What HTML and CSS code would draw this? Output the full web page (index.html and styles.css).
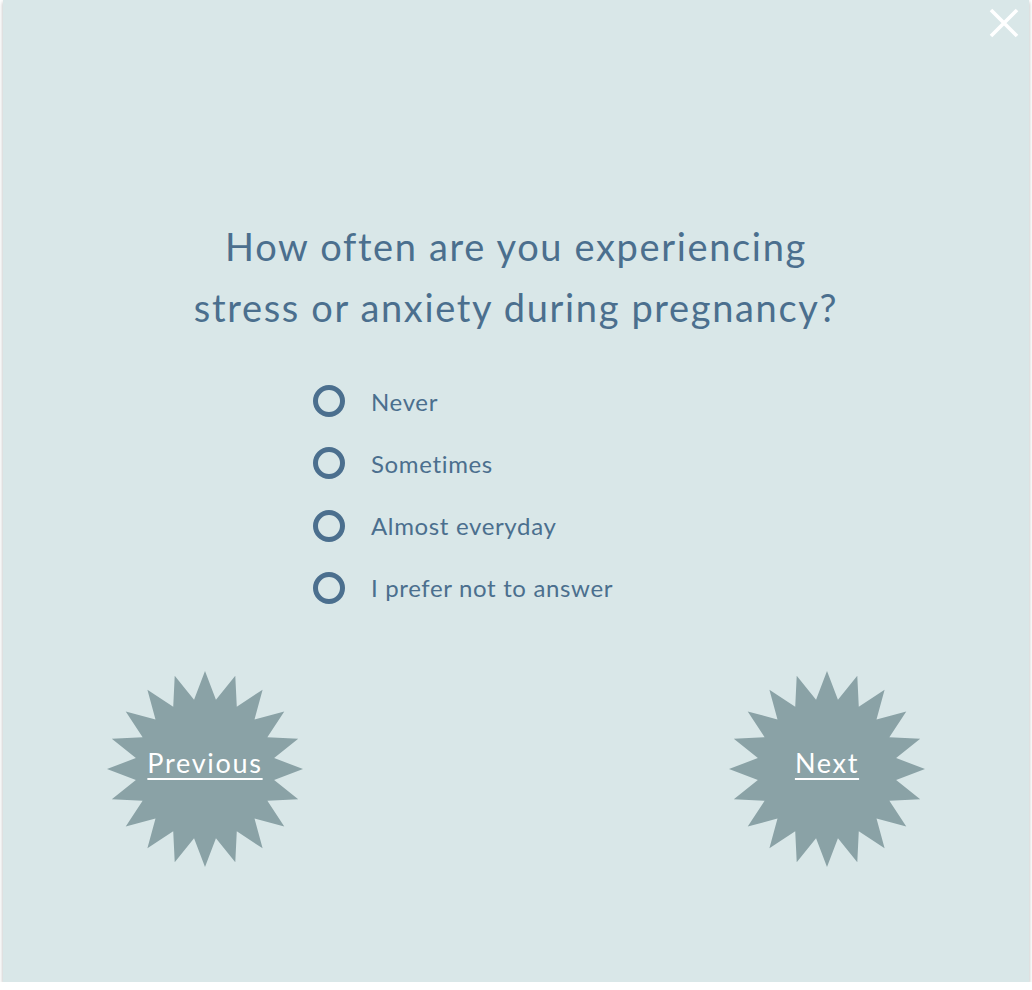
FILE: index.html
```html
<!DOCTYPE html>
<html lang="en">
<head>
<meta charset="utf-8">
<title>Survey</title>
<link rel="stylesheet" href="styles.css">
</head>
<body>
<div class="panel">
  <div class="topbar">
    <button class="close" aria-label="Close">
      <svg width="30" height="30" viewBox="0 0 30 30"><path d="M2 2 L28 28 M28 2 L2 28" stroke="#fff" stroke-width="3.6" stroke-linecap="butt"/></svg>
    </button>
  </div>
  <h1 class="question">How often are you experiencing<br>stress or anxiety during pregnancy?</h1>
  <ul class="options">
    <li class="option"><span class="radio"></span><span class="label">Never</span></li>
    <li class="option"><span class="radio"></span><span class="label">Sometimes</span></li>
    <li class="option"><span class="radio"></span><span class="label">Almost everyday</span></li>
    <li class="option"><span class="radio"></span><span class="label">I prefer not to answer</span></li>
  </ul>
  <div class="nav">
    <a class="burst" href="#">
      <svg class="burst-shape" width="200" height="200" viewBox="0 0 200 200"><polygon fill="#8aa2a6" points="100,2 110.95,30.86 130.28,6.8 131.78,37.63 157.6,20.72 149.5,50.5 179.28,42.4 162.37,68.22 193.2,69.72 169.14,89.05 198,100 169.14,110.95 193.2,130.28 162.37,131.78 179.28,157.6 149.5,149.5 157.6,179.28 131.78,162.37 130.28,193.2 110.95,169.14 100,198 89.05,169.14 69.72,193.2 68.22,162.37 42.4,179.28 50.5,149.5 20.72,157.6 37.63,131.78 6.8,130.28 30.86,110.95 2,100 30.86,89.05 6.8,69.72 37.63,68.22 20.72,42.4 50.5,50.5 42.4,20.72 68.22,37.63 69.72,6.8 89.05,30.86"/></svg>
      <span class="burst-text">Previous</span>
    </a>
    <a class="burst" href="#">
      <svg class="burst-shape" width="200" height="200" viewBox="0 0 200 200"><polygon fill="#8aa2a6" points="100,2 110.95,30.86 130.28,6.8 131.78,37.63 157.6,20.72 149.5,50.5 179.28,42.4 162.37,68.22 193.2,69.72 169.14,89.05 198,100 169.14,110.95 193.2,130.28 162.37,131.78 179.28,157.6 149.5,149.5 157.6,179.28 131.78,162.37 130.28,193.2 110.95,169.14 100,198 89.05,169.14 69.72,193.2 68.22,162.37 42.4,179.28 50.5,149.5 20.72,157.6 37.63,131.78 6.8,130.28 30.86,110.95 2,100 30.86,89.05 6.8,69.72 37.63,68.22 20.72,42.4 50.5,50.5 42.4,20.72 68.22,37.63 69.72,6.8 89.05,30.86"/></svg>
      <span class="burst-text">Next</span>
    </a>
  </div>
</div>
</body>
</html>
```

FILE: styles.css
```css
* { box-sizing: border-box; }
html, body {
  margin: 0;
  padding: 0;
  background: #ffffff;
}
body {
  font-family: "Lato", "Open Sans", sans-serif;
}
.panel {
  margin: 0 3px;
  height: 982px;
  background: #d9e7e8;
  box-shadow: 0 2px 4px rgba(0, 0, 0, 0.3);
  display: flex;
  flex-direction: column;
}
.topbar {
  display: flex;
  justify-content: flex-end;
  padding: 8px 10px 0 0;
  height: 40px;
}
.close {
  background: none;
  border: 0;
  padding: 0;
  width: 30px;
  height: 30px;
  cursor: pointer;
  display: block;
}
.close svg { display: block; }
.question {
  margin: 176px 0 0;
  text-align: center;
  font-weight: 400;
  font-size: 38px;
  line-height: 61px;
  letter-spacing: 1.65px;
  color: #4b6f8e;
}
.options {
  list-style: none;
  margin: 47px auto 0;
  padding: 0;
  width: 406px;
  display: flex;
  flex-direction: column;
  gap: 30.3px;
}
.option {
  display: flex;
  align-items: center;
  gap: 26px;
  height: 32px;
}
.radio {
  width: 32px;
  height: 32px;
  border: 5px solid #4b6f8e;
  border-radius: 50%;
  flex: none;
}
.label {
  font-size: 24px;
  color: #4b6f8e;
  letter-spacing: 0.65px;
}
.nav {
  display: flex;
  justify-content: space-between;
  padding: 0 102px;
  margin-top: 65px;
}
.burst {
  display: grid;
  place-items: center;
  width: 200px;
  height: 200px;
  text-decoration: none;
}
.burst > * { grid-area: 1 / 1; }
.burst-shape { display: block; }
.burst-text {
  color: #ffffff;
  font-size: 27px;
  margin-bottom: 12px;
  text-decoration: underline;
  text-decoration-thickness: 1.5px;
  text-underline-offset: 5px;
  letter-spacing: 1.7px;
}
```
